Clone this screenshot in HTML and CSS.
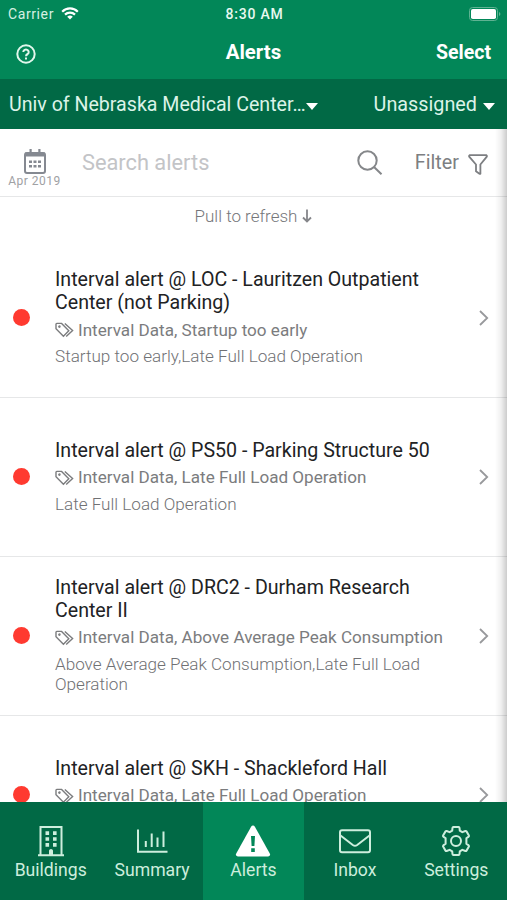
FILE: index.html
```html
<!DOCTYPE html>
<html lang="en">
<head>
    <meta charset="UTF-8">
    <meta name="viewport" content="width=device-width, initial-scale=1.0">
    <title>Alerts</title>
    <link rel="stylesheet" href="styles.css">
</head>
<body>
    <!-- shared icons -->
    <svg class="sprite" xmlns="http://www.w3.org/2000/svg">
        <symbol id="icon-tags" viewBox="0 0 19 16">
            <path d="M1 2.2v4.6l7.4 7.4 5.4-5.4L6.6 1.4H1.8Q1 1.4 1 2.2z"/>
            <path d="M9.8 1.4l7.8 7.2-6.4 5.8"/>
            <circle cx="4.4" cy="4.6" r="0.6"/>
        </symbol>
        <symbol id="icon-chevron" viewBox="0 0 10 16">
            <path d="M1 1l7.2 7L1 15"/>
        </symbol>
    </svg>

    <div class="app">
        <header class="header">
            <div class="status-bar">
                <div class="carrier">
                    <span>Carrier</span>
                    <svg class="wifi" viewBox="0 0 18 13">
                        <path d="M1.2 4.7a11 11 0 0 1 15.6 0M4 7.6a7.1 7.1 0 0 1 10 0" fill="none" stroke="#fff" stroke-width="2.2"/>
                        <path d="M9 12.6L6.2 9.8a4 4 0 0 1 5.6 0z" fill="#fff"/>
                    </svg>
                </div>
                <span class="time">8:30 AM</span>
                <svg class="battery" viewBox="0 0 32 14">
                    <rect x="0.5" y="0.5" width="28" height="13" rx="3" fill="none" stroke="#5fb292"/>
                    <rect x="2" y="2" width="25" height="10" rx="1.8" fill="#fff"/>
                    <path d="M30 5v4q1.4-.6 1.4-2T30 5z" fill="#5fb292"/>
                </svg>
            </div>
            <div class="nav">
                <svg class="help" viewBox="0 0 20 20">
                    <circle cx="10" cy="10" r="8.7"/>
                    <path d="M7.3 8a2.7 2.5 0 1 1 4.4 2Q10 10.9 10 12.2"/>
                    <path d="M10 13.4v2"/>
                </svg>
                <h1>Alerts</h1>
                <a class="select">Select</a>
            </div>
        </header>

        <div class="scope-bar">
            <div class="dropdown site">Univ of Nebraska Medical Center…<i class="caret"></i></div>
            <div class="dropdown assigned">Unassigned<i class="caret"></i></div>
        </div>

        <main class="content">
            <div class="search-bar">
                <div class="month">
                    <svg viewBox="0 0 22 25">
                        <rect x="1" y="4" width="20" height="20" rx="2" fill="none" stroke="#858991" stroke-width="2"/>
                        <path d="M1 3.5h20v4H1zM5.5 0h2.2v4H5.5zM14.3 0h2.2v4h-2.2z" fill="#858991"/>
                        <path d="M5 11.5h3v2.6H5zM9.5 11.5h3v2.6h-3zM14 11.5h3v2.6h-3zM5 16h3v2.6H5zM9.5 16h3v2.6h-3zM14 16h3v2.6h-3z" fill="#858991"/>
                    </svg>
                    <span>Apr 2019</span>
                </div>
                <div class="placeholder">Search alerts</div>
                <svg class="magnifier" viewBox="0 0 26 26">
                    <circle cx="10.5" cy="10.5" r="9.2"/>
                    <path d="M17 17l7.5 7.3"/>
                </svg>
                <div class="filter">
                    <span>Filter</span>
                    <svg viewBox="0 0 20 21">
                        <path d="M1.6 1.2h16.8q.9.6.2 1.7L12.4 10.5v9.2q-.3.4-1 0L8 17.3v-6.8L1.4 2.9Q.7 1.8 1.6 1.2z"/>
                    </svg>
                </div>
            </div>

            <div class="pull">
                <span>Pull to refresh</span>
                <svg viewBox="0 0 10 14"><path d="M5 .5v12M1 8.5l4 4 4-4"/></svg>
            </div>

            <div class="alert">
                <i class="dot"></i>
                <div class="info">
                    <h2>Interval alert @ LOC - Lauritzen Outpatient Center (not Parking)</h2>
                    <p class="tags"><svg><use href="#icon-tags"/></svg>Interval Data, Startup too early</p>
                    <p class="desc">Startup too early,Late Full Load Operation</p>
                </div>
                <svg class="chevron"><use href="#icon-chevron"/></svg>
            </div>
            <div class="alert">
                <i class="dot"></i>
                <div class="info">
                    <h2>Interval alert @ PS50 - Parking Structure 50</h2>
                    <p class="tags"><svg><use href="#icon-tags"/></svg>Interval Data, Late Full Load Operation</p>
                    <p class="desc">Late Full Load Operation</p>
                </div>
                <svg class="chevron"><use href="#icon-chevron"/></svg>
            </div>
            <div class="alert">
                <i class="dot"></i>
                <div class="info">
                    <h2>Interval alert @ DRC2 - Durham Research Center II</h2>
                    <p class="tags"><svg><use href="#icon-tags"/></svg>Interval Data, Above Average Peak Consumption</p>
                    <p class="desc">Above Average Peak Consumption,Late Full Load Operation</p>
                </div>
                <svg class="chevron"><use href="#icon-chevron"/></svg>
            </div>
            <div class="alert">
                <i class="dot"></i>
                <div class="info">
                    <h2>Interval alert @ SKH - Shackleford Hall</h2>
                    <p class="tags"><svg><use href="#icon-tags"/></svg>Interval Data, Late Full Load Operation</p>
                    <p class="desc"></p>
                </div>
                <svg class="chevron"><use href="#icon-chevron"/></svg>
            </div>
        </main>

        <nav class="tabs">
            <a class="tab">
                <svg viewBox="0 0 32 32">
                    <path d="M3 30.3h26M5.5 30V2h21v28"/>
                    <path class="solid" d="M10.5 6.3h3.6v3.6h-3.6zM18 6.3h3.6v3.6H18zM10.5 12.2h3.6v3.6h-3.6zM18 12.2h3.6v3.6H18zM10.5 18.1h3.6v3.6h-3.6zM18 18.1h3.6v3.6H18zM14 30v-4.5q.3-1.5 2-1.5t2 1.5V30z"/>
                </svg>
                <span>Buildings</span>
            </a>
            <a class="tab">
                <svg viewBox="0 0 32 32"><path d="M2 4.5v22.2h29.500M9.800 22v-6M15.700 22V8.500M21.500 22v-9.500M27.500 22V6.500"/></svg>
                <span>Summary</span>
            </a>
            <a class="tab active">
                <svg viewBox="0 0 36 32">
                    <path class="solid" d="M18 .5q1.200 0 1.900 1.200l15 27q.9 2.500-1.700 2.700H2.800Q.2 31.200 1.100 28.700l15-27Q16.800.5 18 .5z"/>
                    <path class="mark" d="M16 11h4l-.6 10h-2.800zM16.200 23.300h3.600v3.600h-3.600z"/>
                </svg>
                <span>Alerts</span>
            </a>
            <a class="tab">
                <svg viewBox="0 0 32 32">
                    <rect x="1" y="5.200" width="30" height="22" rx="2"/>
                    <path d="M1.500 10.500l12.300 9.500q2.200 1.500 4.400 0l12.300-9.500"/>
                </svg>
                <span>Inbox</span>
            </a>
            <a class="tab">
                <svg viewBox="0 0 32 32">
                    <path d="M13.3 2h5.400q.7 0 .8.800l.3 2.800 2.500 1.500 3-1.100q.8-.2 1.200.4l2.400 4q.4.700-.2 1.200l-2.300 1.700v5.400l2.300 1.700q.6.500.2 1.200l-2.400 4q-.4.600-1.200.4l-3-1.100-2.500 1.500-.3 2.800q-.1.800-.8.800h-5.400q-.7 0-.8-.8l-.3-2.800-2.500-1.500-3 1.100q-.8.200-1.200-.4l-2.400-4q-.4-.7.200-1.200l2.300-1.700v-5.400l-2.300-1.700q-.6-.5-.2-1.200l2.400-4q.4-.6 1.200-.4l3 1.100 2.500-1.500.3-2.800q.1-.8.8-.8z"/>
                    <circle cx="16" cy="16" r="5"/>
                </svg>
                <span>Settings</span>
            </a>
        </nav>
    </div>
</body>
</html>
```
FILE: styles.css
```css
* {
    margin: 0;
    padding: 0;
    box-sizing: border-box;
}

body {
    font-family: Roboto, sans-serif;
    background: #fff;
    color: #212224;
}

.sprite {
    display: none;
}

.app {
    height: 900px;
    display: flex;
    flex-direction: column;
    overflow: hidden;
}

.header {
    height: 79px;
    flex: none;
    background: #028758;
    color: #fff;
}

.status-bar {
    height: 27px;
    display: grid;
    grid-template-columns: 1fr auto 1fr;
    align-items: center;
    padding: 0 6px 0 8px;
    font-size: 14px;
    letter-spacing: 0.6px;
}

.carrier {
    display: flex;
    align-items: center;
    gap: 7px;
    color: #d5f0e2;
}

.wifi {
    width: 18px;
    height: 13px;
}

.time {
    font-weight: 500;
    color: #e8f8f0;
    letter-spacing: 0.8px;
}

.battery {
    width: 32px;
    height: 14px;
    justify-self: end;
}

.nav {
    height: 49px;
    display: grid;
    grid-template-columns: 1fr auto 1fr;
    align-items: center;
    padding: 0 16px;
}

.help {
    width: 20px;
    height: 20px;
    margin-top: 5px;
    fill: none;
    stroke: #e1f7ec;
    stroke-width: 2;
}

.nav h1 {
    font-size: 20.4px;
    font-weight: 700;
}

.select {
    padding-top: 2px;
    font-size: 19.5px;
    font-weight: 700;
    justify-self: end;
}

.scope-bar {
    height: 50px;
    flex: none;
    background: #016945;
    color: #dcf3e8;
    display: flex;
    justify-content: space-between;
    align-items: center;
    padding: 0 12px 0 9px;
    font-size: 19.8px;
}

.dropdown {
    display: flex;
    align-items: center;
}

.site {
    font-size: 19.6px;
}

.caret {
    margin-top: 5px;
    border: 6px solid transparent;
    border-top: 7px solid #fff;
    border-bottom: none;
}

.assigned .caret {
    margin-left: 6px;
}

.content {
    flex: 1;
    position: relative;
    overflow: hidden;
}

/* shadow along the right edge */
.content::after {
    content: "";
    position: absolute;
    top: 0;
    right: 0;
    bottom: 0;
    width: 12px;
    background: linear-gradient(to right, rgba(0, 0, 0, 0), rgba(0, 0, 0, 0.06) 50%, rgba(0, 0, 0, 0.2));
}

.search-bar {
    height: 68px;
    display: flex;
    align-items: center;
    border-bottom: 1px solid #e6e7e8;
    padding-right: 19px;
}

.month {
    width: 69px;
    display: flex;
    flex-direction: column;
    align-items: center;
    padding-top: 12px;
    font-size: 12px;
    line-height: 14px;
    letter-spacing: 0.5px;
    color: #a0a1a4;
}

.month svg {
    width: 22px;
    height: 25px;
}

.placeholder {
    flex: 1;
    padding-left: 13px;
    font-size: 21.8px;
    color: #c3c4c7;
}

.magnifier {
    width: 26px;
    height: 26px;
    margin-right: 32px;
    fill: none;
    stroke: #85878a;
    stroke-width: 2;
}

.filter {
    display: flex;
    align-items: center;
    gap: 9px;
    font-size: 19.8px;
    color: #7d7f82;
}

.filter svg {
    width: 20px;
    height: 21px;
    margin-top: 4px;
    fill: none;
    stroke: #7d7f82;
    stroke-width: 1.8;
}

.pull {
    height: 42px;
    display: flex;
    justify-content: center;
    align-items: flex-start;
    gap: 5px;
    padding-top: 9px;
    font-size: 17px;
    line-height: 20px;
    font-weight: 300;
    color: #75767a;
}

.pull svg {
    width: 10px;
    height: 14px;
    margin-top: 3px;
    fill: none;
    stroke: #85868a;
    stroke-width: 1.8;
}

.alert {
    height: 159px;
    display: flex;
    align-items: center;
    padding: 0 18px 0 13px;
    border-bottom: 1px solid #e6e7e8;
}

.dot {
    width: 17px;
    height: 17px;
    margin-top: -1px;
    border-radius: 50%;
    background: #ff3a30;
}

.info {
    width: 400px;
    margin-left: 25px;
}

.info h2 {
    font-size: 19.6px;
    font-weight: 400;
    line-height: 22.7px;
}

.tags {
    display: flex;
    align-items: center;
    gap: 4px;
    margin: 5px 0 6px;
    font-size: 17.1px;
    line-height: 20.5px;
    color: #7b7c7e;
}

.tags svg {
    width: 19px;
    height: 16px;
    fill: none;
    stroke: #7b7c7e;
    stroke-width: 1.4;
}

.desc {
    min-height: 20.5px;
    font-size: 17.1px;
    line-height: 20.5px;
    font-weight: 300;
    color: #707174;
}

.chevron {
    width: 10px;
    height: 16px;
    margin-left: auto;
    fill: none;
    stroke: #98999c;
    stroke-width: 1.8;
}

.tabs {
    height: 98px;
    flex: none;
    display: grid;
    grid-template-columns: repeat(5, 1fr);
    background: #016945;
}

.tab {
    display: flex;
    flex-direction: column;
    align-items: center;
    padding-top: 23px;
    font-size: 17.6px;
    line-height: 22px;
    color: #cdeedd;
}

.tab svg {
    height: 32px;
    margin-bottom: 2px;
    fill: none;
    stroke: #cdeedd;
    stroke-width: 2;
}

.tab .solid {
    fill: #cdeedd;
    stroke: none;
}

.tab.active {
    background: #028758;
}

.tab.active .solid {
    fill: #fff;
}

.tab .mark {
    fill: #028758;
    stroke: none;
}
```
